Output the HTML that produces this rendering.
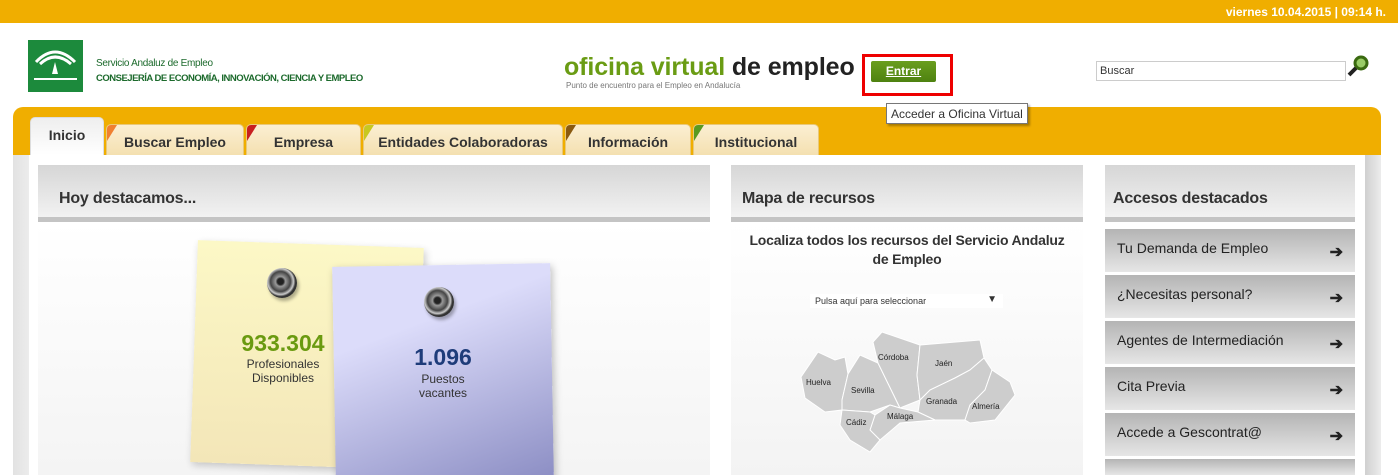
<!DOCTYPE html>
<html style="width:1398px;height:475px;overflow:hidden"><head><meta charset="utf-8"><style>
*{margin:0;padding:0;box-sizing:border-box}
body{width:1398px;height:475px;overflow:hidden;background:#fff;font-family:"Liberation Sans",sans-serif;position:relative}
.abs{position:absolute}
.top{left:0;top:0;width:1398px;height:23px;background:#f0ae00;color:#fff;font-size:12px;font-weight:bold;text-align:right;padding:5px 12px 0 0}
.tab{position:absolute;top:124px;height:31px;background:linear-gradient(#fbefd3,#f4e0b0);border:1px solid #e9c878;border-bottom:none;border-radius:5px 5px 0 0;font-weight:bold;font-size:14px;color:#333;text-align:center;padding-top:9px;overflow:hidden}
.tab i{position:absolute;left:0;top:0;width:0;height:0;border-top:16px solid;border-right:10px solid transparent}
.ph{position:absolute;top:165px;height:52px;background:linear-gradient(#d6d6d6,#f2f2f2);font-weight:bold;font-size:16px;color:#333;padding:25px 0 0 21px;letter-spacing:-.2px}
.pb{position:absolute;top:217px;height:5px;background:#c4c4c4}
.btn{position:absolute;left:1105px;width:250px;height:43px;background:linear-gradient(#b4b4b4,#e6e6e6);font-size:14px;color:#222;padding:11px 0 0 12px}
.btn b{position:absolute;right:12px;top:13px;font-size:16px}
.pin{position:absolute;width:30px;height:30px;border-radius:50%;background:radial-gradient(circle at 45% 45%,#222 0 3px,#999 5px,#444 10px,#ccc 13px,#333 15px);box-shadow:2px 3px 3px rgba(0,0,0,.3)}
</style></head><body>
<div class="abs top">viernes 10.04.2015 | 09:14 h.</div>
<div class="abs" style="left:28px;top:40px;width:55px;height:52px;background:#1c8a3c"><svg width="55" height="52"><path d="M8 22 Q27 2 47 22 M12 24 Q27 10 43 24" stroke="#fff" stroke-width="3" fill="none"/><path d="M27 22 L30 34 L24 34Z" fill="#fff"/><rect x="6" y="38" width="43" height="2" fill="#fff"/></svg></div>
<div class="abs" style="left:96px;top:58px;font-size:10px;color:#1c6a2c;letter-spacing:-.3px">Servicio Andaluz de Empleo</div>
<div class="abs" style="left:96px;top:73px;font-size:9.5px;color:#1c6a2c;font-weight:bold;letter-spacing:-.5px">CONSEJERÍA DE ECONOMÍA, INNOVACIÓN, CIENCIA Y EMPLEO</div>
<div class="abs" style="left:564px;top:53px;font-size:25px;font-weight:bold;color:#6a9c14;letter-spacing:-.1px">oficina virtual <span style="color:#222">de empleo</span></div>
<div class="abs" style="left:566px;top:81px;font-size:8px;color:#777">Punto de encuentro para el Empleo en Andalucía</div>
<div class="abs" style="left:862px;top:54px;width:91px;height:42px;border:3px solid #e00"></div>
<div class="abs" style="left:871px;top:61px;width:65px;height:21px;background:linear-gradient(#6a9e1e,#4e8210);border-radius:2px;color:#fff;font-size:12px;font-weight:bold;text-align:center;padding-top:3px;text-decoration:underline">Entrar</div>
<div class="abs" style="left:1096px;top:61px;width:250px;height:20px;border:1px solid #ccc;font-size:11px;padding:3px 3px;color:#333">Buscar</div>
<svg class="abs" style="left:1346px;top:54px" width="24" height="24"><circle cx="15" cy="9" r="6" stroke="#3a6a10" stroke-width="3" fill="#9c6"/><path d="M10 14 L3 21" stroke="#222" stroke-width="4"/></svg>
<div class="abs" style="left:13px;top:107px;width:1368px;height:48px;background:#f0ae00;border-radius:10px 10px 0 0"></div>
<div class="abs" style="left:13px;top:155px;width:16px;height:320px;background:linear-gradient(90deg,#e2e2e2,#ececec)"></div>
<div class="abs" style="left:1365px;top:155px;width:16px;height:320px;background:linear-gradient(90deg,#d0d0d0,#ececec)"></div>
<div class="abs" style="left:886px;top:103px;width:142px;height:21px;background:#fff;border:1px solid #777;font-size:12px;color:#333;padding:3px 4px;box-shadow:2px 2px 2px rgba(0,0,0,.3);z-index:2">Acceder a Oficina Virtual</div>
<div class="tab" style="left:30px;top:117px;width:74px;height:38px;background:linear-gradient(#eee,#fff);border-color:#ddd">Inicio</div>
<div class="tab" style="left:106px;width:138px;padding-top:9px"><i style="color:#f08030"></i>Buscar Empleo</div>
<div class="tab" style="left:246px;width:115px"><i style="color:#c82020"></i>Empresa</div>
<div class="tab" style="left:363px;width:200px"><i style="color:#c8c820"></i>Entidades Colaboradoras</div>
<div class="tab" style="left:565px;width:126px"><i style="color:#8a5a10"></i>Información</div>
<div class="tab" style="left:693px;width:126px"><i style="color:#5a9a20"></i>Institucional</div>
<div class="ph" style="left:38px;width:672px">Hoy destacamos...</div><div class="pb" style="left:38px;width:672px"></div>
<div class="abs" style="left:38px;top:222px;width:672px;height:253px;background:linear-gradient(#fff,#f4f4f4)"></div>
<div class="ph" style="left:731px;width:352px;padding-left:11px">Mapa de recursos</div><div class="pb" style="left:731px;width:352px"></div>
<div class="abs" style="left:731px;top:222px;width:352px;height:253px;background:linear-gradient(#fff,#f3f3f3)"></div>
<div class="ph" style="left:1105px;width:250px;padding-left:8px">Accesos destacados</div><div class="pb" style="left:1105px;width:250px"></div>
<div class="abs" style="left:194px;top:244px;width:226px;height:222px;background:linear-gradient(#fcf8c6,#f3e6b8);transform:rotate(2deg);box-shadow:2px 3px 8px rgba(0,0,0,.2)"></div>
<div class="pin" style="left:267px;top:268px"></div>
<div class="abs" style="left:220px;top:330px;width:126px;text-align:center;font-size:23px;font-weight:bold;color:#6a9a10">933.304</div>
<div class="abs" style="left:220px;top:357px;width:126px;text-align:center;font-size:12px;color:#333;line-height:14px">Profesionales<br>Disponibles</div>
<div class="abs" style="left:334px;top:265px;width:218px;height:215px;background:linear-gradient(160deg,#dcdcfa 30%,#8c8ec4);transform:rotate(-1deg);box-shadow:2px 3px 8px rgba(0,0,0,.25)"></div>
<div class="pin" style="left:424px;top:287px"></div>
<div class="abs" style="left:383px;top:344px;width:120px;text-align:center;font-size:23px;font-weight:bold;color:#1e3c7a">1.096</div>
<div class="abs" style="left:383px;top:372px;width:120px;text-align:center;font-size:12px;color:#333;line-height:14px">Puestos<br>vacantes</div>
<div class="abs" style="left:731px;top:231px;width:352px;text-align:center;font-size:14px;font-weight:bold;color:#333;line-height:19px;letter-spacing:-.2px">Localiza todos los recursos del Servicio Andaluz<br>de Empleo</div>
<div class="abs" style="left:810px;top:294px;width:193px;height:14px;background:#fff;font-size:9px;color:#333;padding:2px 5px">Pulsa aquí para seleccionar<span style="position:absolute;right:6px;top:0;font-size:10px">▼</span></div>
<svg class="abs" style="left:730px;top:280px" width="360" height="195" font-family="Liberation Sans" font-size="8" fill="#222">
<g fill="#cdcdcd" stroke="#fff" stroke-width="1">
<path d="M71 97 L88 72 L105 80 L115 77 L118 94 L112 120 L112 130 L95 132 L75 118Z"/>
<path d="M118 94 L130 75 L148 83 L170 128 L160 125 L140 132 L112 130 L112 120Z"/>
<path d="M148 83 L143 62 L152 52 L190 65 L187 95 L190 120 L170 128Z"/>
<path d="M190 65 L250 60 L254 78 L240 90 L225 98 L200 110 L190 120 L187 95Z"/>
<path d="M190 120 L200 110 L225 98 L240 90 L254 78 L262 90 L255 110 L240 125 L235 140 L205 140 L188 132Z"/>
<path d="M262 90 L280 102 L285 115 L265 140 L240 143 L235 140 L240 125 L255 110Z"/>
<path d="M170 128 L188 132 L205 140 L170 143 L150 160 L140 150 L145 135 L160 125Z"/>
<path d="M112 130 L140 132 L145 135 L140 150 L150 160 L140 172 L120 160 L110 145Z"/>
</g>
<text x="148" y="80">Córdoba</text><text x="205" y="86">Jaén</text><text x="76" y="105">Huelva</text><text x="121" y="113">Sevilla</text><text x="196" y="124">Granada</text><text x="242" y="129">Almería</text><text x="157" y="139">Málaga</text><text x="116" y="145">Cádiz</text>
</svg>
<div class="btn" style="top:229px">Tu Demanda de Empleo<b>➔</b></div>
<div class="btn" style="top:275px">¿Necesitas personal?<b>➔</b></div>
<div class="btn" style="top:321px">Agentes de Intermediación<b>➔</b></div>
<div class="btn" style="top:367px">Cita Previa<b>➔</b></div>
<div class="btn" style="top:413px">Accede a Gescontrat@<b>➔</b></div>
<div class="btn" style="top:459px;height:16px"></div>
</body></html>
